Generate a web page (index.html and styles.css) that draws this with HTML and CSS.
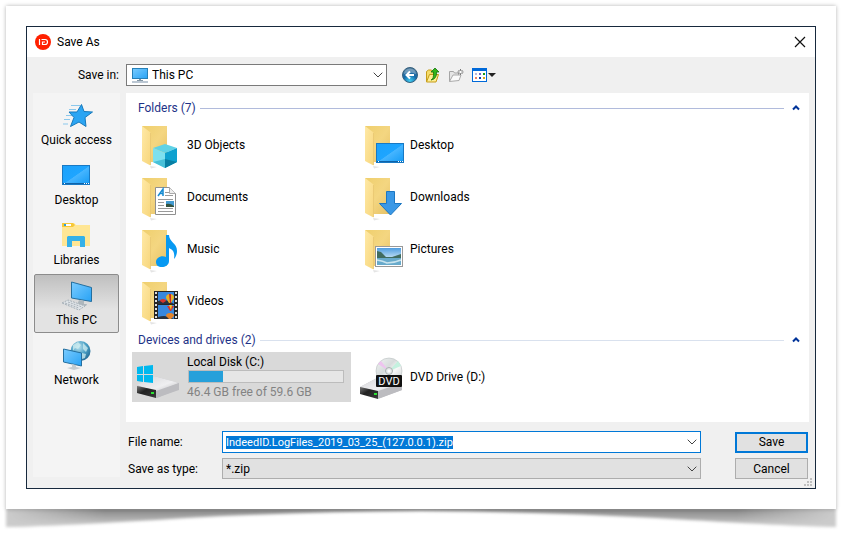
FILE: index.html
```html
<!DOCTYPE html>
<html lang="en">
<head>
<meta charset="utf-8">
<title>Save As</title>
<link rel="stylesheet" href="styles.css">
</head>
<body>
<svg class="defs" width="0" height="0" aria-hidden="true">
  <defs>
    <linearGradient id="flap" x1="0" y1="0" x2="1" y2="1"><stop offset="0" stop-color="#ffe9a6"/><stop offset="1" stop-color="#f7d67c"/></linearGradient>
    <linearGradient id="back" x1="0" y1="0" x2="1" y2="1"><stop offset="0" stop-color="#efcf6d"/><stop offset=".5" stop-color="#f4d681"/><stop offset="1" stop-color="#e6c165"/></linearGradient>
    <linearGradient id="screen" x1="0" y1="0" x2="1" y2="1"><stop offset="0" stop-color="#1ba1fb"/><stop offset=".5" stop-color="#1ea5ff"/><stop offset=".52" stop-color="#46b5ff"/><stop offset="1" stop-color="#129af5"/></linearGradient>
    <linearGradient id="glass" x1="0" y1="0" x2="1" y2="1"><stop offset="0" stop-color="#7bccff"/><stop offset="1" stop-color="#27a2f5"/></linearGradient>
    <linearGradient id="metal" x1="0" y1="0" x2="1" y2="1"><stop offset="0" stop-color="#d5d5d8"/><stop offset=".6" stop-color="#efeff1"/><stop offset="1" stop-color="#b5b5b8"/></linearGradient>
    <linearGradient id="front" x1="0" y1="0" x2="1" y2="1"><stop offset="0" stop-color="#777"/><stop offset=".4" stop-color="#222"/><stop offset="1" stop-color="#3a3a3a"/></linearGradient>
    <linearGradient id="disc" x1="0" y1="0" x2="1" y2="1"><stop offset="0" stop-color="#f2f4f4"/><stop offset=".4" stop-color="#d7dcdc"/><stop offset=".6" stop-color="#f8f8f8"/><stop offset="1" stop-color="#c4cbcb"/></linearGradient>
    <radialGradient id="globe" cx=".4" cy=".3" r=".8"><stop offset="0" stop-color="#b9e2ee"/><stop offset=".5" stop-color="#4a9fc4"/><stop offset="1" stop-color="#1c5f8a"/></radialGradient>
    <radialGradient id="orb" cx=".5" cy=".9" r=".9"><stop offset="0" stop-color="#42d0f5"/><stop offset=".5" stop-color="#1469a8"/><stop offset="1" stop-color="#4b7696"/></radialGradient>
    <linearGradient id="sky" x1="0" y1="0" x2="0" y2="1"><stop offset="0" stop-color="#4e9de0"/><stop offset="1" stop-color="#d9edf8"/></linearGradient>
    <linearGradient id="lift" x1="0" y1="0" x2="0" y2="1"><stop offset="0" stop-color="#808080"/><stop offset=".4" stop-color="#a0a0a0"/><stop offset="1" stop-color="#d2d2d2"/></linearGradient>
    <linearGradient id="corners"><stop offset="0" stop-color="#ccc"/><stop offset=".12" stop-color="#ccc" stop-opacity="0"/><stop offset=".88" stop-color="#ccc" stop-opacity="0"/><stop offset="1" stop-color="#ccc"/></linearGradient>
    <filter id="soft" x="-5%" y="-50%" width="110%" height="200%"><feGaussianBlur stdDeviation="1.6"/></filter>
    <g id="folder">
      <path d="M15 45l7 1-6 1.500z" fill="#e4e4e4"/>
      <path d="M7 5h25v36H14z" fill="url(#back)"/>
      <path d="M7 5l8.500 6.500v33L7 40z" fill="url(#flap)"/>
      <path d="M15.500 12v32" stroke="#e8c771" stroke-width=".8"/>
    </g>
  </defs>
</svg>

<main class="sheet">
  <svg class="sheet-shadow" viewBox="0 0 830 30" preserveAspectRatio="none" aria-hidden="true">
    <g filter="url(#soft)">
      <path d="M0 0H830V19Q780 18 650 10Q540 4 415 3Q290 4 180 10Q60 18 0 19z" fill="url(#lift)"/>
      <path d="M0 0H830V19Q780 18 650 10Q540 4 415 3Q290 4 180 10Q60 18 0 19z" fill="url(#corners)"/>
    </g>
  </svg>
  <section class="dialog" aria-labelledby="title">
    <header class="titlebar">
      <svg width="16" height="16" viewBox="0 0 16 16" aria-hidden="true"><circle cx="8" cy="8" r="8" fill="#ff2000"/><path d="M4.500 5v6M6.500 5.500H10q2.500 0 2.500 2.500T10 10.500H7.500V8H10" fill="none" stroke="#fff" stroke-width="1.200"/></svg>
      <h1 id="title">Save As</h1>
      <button class="close" type="button" aria-label="Close"><svg width="12" height="12" viewBox="0 0 12 12"><path d="M1 1l10 10M11 1L1 11" stroke="#111" stroke-width="1.200"/></svg></button>
    </header>

    <div class="toolbar">
      <label for="save-in">Save in:</label>
      <div class="combo location">
        <svg class="combo-icon" width="18" height="16" viewBox="0 0 18 16" aria-hidden="true"><rect x="1.500" y="1.500" width="15" height="10" fill="url(#glass)" stroke="#2680b8"/><path d="M6 13.500h6M8 12.500h2" stroke="#8296a5"/><path d="M1 15h16" stroke="#a5b5c4" stroke-width="1.500"/></svg>
        <select id="save-in"><option>This PC</option></select>
        <svg class="chevron" width="10" height="6" viewBox="0 0 10 6" aria-hidden="true"><path d="M.7.700L5 5 9.300.700"/></svg>
      </div>
      <nav class="tools" aria-label="Folder tools">
        <button type="button" aria-label="Back"><svg width="16" height="16" viewBox="0 0 16 16"><circle cx="8" cy="8" r="7.500" fill="url(#orb)" stroke="#37617e"/><path d="M2 7a6 5.500 0 0 1 12 0Q8 4 2 7z" fill="#fff" opacity=".3"/><path d="M12 8H4.500M8 4.500L4.500 8 8 11.500" fill="none" stroke="#fff" stroke-width="2"/></svg></button>
        <button type="button" aria-label="Up one level"><svg width="16" height="16" viewBox="0 0 16 16"><path d="M1.500 14.500v-10l2-1.500h3l1 2h3v2.500" fill="#f5dc6b" stroke="#c59c1a"/><path d="M1.500 15l3-7.500h9L11 15z" fill="#ffee94" stroke="#c59c1a"/><path d="M6 13q3-1 2.500-8H6l4-4 4 4h-2.500Q12 12 6 13z" fill="#31b51d" stroke="#17750d" stroke-width=".8"/></svg></button>
        <button type="button" aria-label="New folder"><svg width="16" height="16" viewBox="0 0 16 16"><path d="M1.500 14.500V4.500h4l1 1.500h4v2" fill="#e5e5e5" stroke="#a5a5a5"/><path d="M1.500 14.500L5 8h8l-2 5.500z" fill="#fafafa" stroke="#aaa"/><path d="M12.500 2v6M9.500 5h6M10.500 3l4 4M14.500 3l-4 4" stroke="#777"/><circle cx="12.500" cy="5" r="1.200" fill="#fff"/></svg></button>
        <button type="button" aria-label="View menu"><svg width="25" height="16" viewBox="0 0 25 16"><rect x="1.500" y="1.500" width="14" height="13" fill="#fff" stroke="#0069d9"/><path d="M1 2.500h15" stroke="#0069d9" stroke-width="3"/><path d="M4 6h2v2H4z" fill="#b7b7dc"/><path d="M8 6h2v2H8z" fill="#7467c9"/><path d="M12 6h2v2h-2z" fill="#169b16"/><path d="M4 10h2v2H4z" fill="#f08063"/><path d="M8 10h2v2H8z" fill="#0b3dab"/><path d="M12 10h2v2h-2z" fill="#dba717"/><path d="M17 6h8l-4 4z" fill="#222"/></svg></button>
      </nav>
    </div>

    <div class="body">
      <nav class="places" aria-label="Places">
        <button type="button"><svg width="32" height="32" viewBox="0 0 32 32"><path d="M10 5.500h9M8 9.500h7M5 15.500h6M3 19.500h6M2 24h5" stroke="#8bc8ec"/><path d="M20.500 4.500l2.500 7 8.500.5-7.500 5.500 1 9-7-4.500-8.500 4.500 3.500-9-5-5.500h8z" fill="#2ba5f3" stroke="#1779bb"/></svg><span>Quick access</span></button>
        <button type="button"><svg width="32" height="32" viewBox="0 0 32 32"><rect x="1.500" y="5.500" width="27" height="19" fill="url(#screen)" stroke="#1879c4"/><path d="M2 23.500h26" stroke="#0e62a8"/><path d="M3 23.500h1M23 23.500h1M25 23.500h1M27 23.500h1" stroke="#fff"/></svg><span>Desktop</span></button>
        <button type="button"><svg width="32" height="32" viewBox="0 0 32 32"><path d="M1 3h12l2 2h14v21H1z" fill="#ffe694"/><path d="M1 3h11l2 2-2 2H1z" fill="#f7c838"/><path d="M3 4h7v2H3z" fill="#fff"/><path d="M3 4h2v2H3z" fill="#2aa0dc"/><path d="M6 27V17l1-1h16l1 1v10h-5v-6h-8v6z" fill="#35b1e8"/></svg><span>Libraries</span></button>
        <button type="button" class="current" aria-current="true"><svg width="32" height="32" viewBox="0 0 32 32"><path d="M10.500 2l20 5.500v14l-20-3.500z" fill="url(#glass)" stroke="#246f9f"/><path d="M18 20l5 1v3h3l-1 2-9-1z" fill="#aeb7bd"/><path d="M1 23l6-3 17 6-6 4z" fill="#dfe4e8" stroke="#a5afb7" stroke-dasharray="2 1"/><path d="M4 23l14 5M7 22l14 5" stroke="#aab2b9" stroke-dasharray="2 1"/></svg><span>This PC</span></button>
        <button type="button"><svg width="32" height="32" viewBox="0 0 32 32"><circle cx="19.500" cy="11" r="10" fill="url(#globe)"/><path d="M12 5l5-3 3 3-3 4-3-1-2 3zM22 3l5 5-2 4-3-3zM21 13l4 1-1 4-3 1z" fill="#d0edf0" opacity=".75"/><path d="M2.500 9l18 4v13l-18-4z" fill="url(#glass)" stroke="#246f9f"/><path d="M11 24l4 1v2l5 1-7 2-7-2 5-1z" fill="#c4ccd1"/></svg><span>Network</span></button>
      </nav>

      <div class="content">
        <div class="files">
          <section>
            <header class="group"><h2>Folders (7)</h2><button type="button" aria-label="Collapse Folders"><svg width="8" height="6" viewBox="0 0 8 6"><path d="M1 4.500L4 1.500l3 3"/></svg></button></header>
            <ul class="tiles">
              <li><svg width="48" height="48" viewBox="0 0 48 48"><use href="#folder"/><path d="M18 27l12-4 12 4-12 5z" fill="#5fd2e6"/><path d="M18 27l12 5v15l-12-6z" fill="#7de0ef"/><path d="M42 27l-12 5v15l12-6z" fill="#0ea1cf"/><path d="M18 41l12-3v9z" fill="#48c0d8"/><path d="M42 41l-12-3v9z" fill="#087fa3"/></svg><span>3D Objects</span></li>
              <li><svg width="48" height="48" viewBox="0 0 48 48"><use href="#folder"/><rect x="18.500" y="22.500" width="27" height="19" fill="url(#screen)" stroke="#1879c4"/><path d="M19 40.500h26" stroke="#0e62a8"/><path d="M20 40.500h1M40 40.500h1M42 40.500h1M44 40.500h1" stroke="#fff"/></svg><span>Desktop</span></li>
              <li><svg width="48" height="48" viewBox="0 0 48 48"><use href="#folder"/><path d="M20.500 14.500h14l6 6v21h-20z" fill="#fff" stroke="#8f8f8f"/><path d="M34.500 14.500v6h6" fill="#eee" stroke="#aaa"/><path d="M23 23l5-7v7M25 20.500h3" fill="none" stroke="#168bd1" stroke-width="1.500"/><path d="M30 19.500h4M30 22.500h8M23 26.500h15M23 29.500h6M23 32.500h6M23 35.500h15M23 38.500h15" stroke="#9a9a9a"/><path d="M31 28h8v6h-8z" fill="#439bd1"/><path d="M31 31q4-1 8 2v1h-8z" fill="#35533f"/></svg><span>Documents</span></li>
              <li><svg width="48" height="48" viewBox="0 0 48 48"><use href="#folder"/><path d="M28.500 18.500h8v12h7L32.500 42 21.500 30.500h7z" fill="#3a98e6" stroke="#1c77c2"/></svg><span>Downloads</span></li>
              <li><svg width="48" height="48" viewBox="0 0 48 48"><use href="#folder"/><path d="M31 10h3c0 7 8 8 8 16 0 4-2 7-3 8 1-7-1-9-5-11v13c0 4-4 6-7 6-4 0-6-2-6-5 0-4 5-7 10-5z" fill="#0799f2"/></svg><span>Music</span></li>
              <li><svg width="48" height="48" viewBox="0 0 48 48"><use href="#folder"/><rect x="17.500" y="21.500" width="27" height="20" fill="#fff" stroke="#999"/><path d="M19 23h24v12H19z" fill="url(#sky)"/><path d="M19 26l4 1 5 5 6 0 9-3v6H19z" fill="#416c5f"/><path d="M19 33h24v7H19z" fill="#68aacb"/><path d="M19 35q6 1 10 3 7 0 14-3" fill="none" stroke="#c9e4ee" stroke-width="1.500"/></svg><span>Pictures</span></li>
              <li><svg width="48" height="48" viewBox="0 0 48 48"><use href="#folder"/><path d="M19 14h24v28H19z" fill="#252525"/><path d="M23 15h16v12H23zM23 28h16v14H23z" fill="#3888de"/><path d="M21 15v27M41 15v27" stroke="#ddd" stroke-width="2" stroke-dasharray="2 2"/><path d="M23 24q8-3 16 3H23zM23 40q8-3 16 2H23z" fill="#28313d"/><path d="M31 21a4 4 0 1 1 8 0l-3 5h-2z" fill="#e8b225"/><path d="M34 17h2v9h-1z" fill="#cc2828"/><path d="M25 24a3 2 0 0 1 6 0l-3 2zM32 29h7l-3 5h-1z" fill="#d6342c"/><path d="M34 28h3l-1 5z" fill="#f4c92d"/><path d="M31 39a4 3 0 0 1 8 0l-3 3h-2z" fill="#e5852b"/></svg><span>Videos</span></li>
            </ul>
          </section>
          <section>
            <header class="group devices"><h2>Devices and drives (2)</h2><button type="button" aria-label="Collapse Devices and drives"><svg width="8" height="6" viewBox="0 0 8 6"><path d="M1 4.500L4 1.500l3 3"/></svg></button></header>
            <ul class="tiles">
              <li class="selected">
                <svg width="48" height="48" viewBox="0 0 48 48"><path d="M2 33l17-10 25 7v6l-22 9-20-5z" fill="#c2c2c5"/><path d="M2 32l17-9 25 7-22 9z" fill="url(#metal)"/><path d="M2 33l19 4v8L2 40z" fill="url(#front)"/><path d="M21 38l23-8v7l-23 8z" fill="#bcbcc0"/><path d="M16 39h3v2h-3z" fill="#2be334"/><path d="M2 14l6-1v8H2zM9 13l9-1v9H9zM2 22h6v7l-6-1zM9 22h9v8l-9-1z" fill="#00b8ee"/></svg>
                <div class="drive">
                  <span>Local Disk (C:)</span>
                  <div class="meter" role="img" aria-label="22% used"><div class="used"></div></div>
                  <span class="free">46.4 GB free of 59.6 GB</span>
                </div>
              </li>
              <li>
                <svg width="48" height="48" viewBox="0 0 48 48"><path d="M2 34l17-9 25 6v6l-22 8-20-5z" fill="#c2c2c5"/><path d="M2 34l17-9 25 6-22 8z" fill="url(#metal)"/><path d="M2 34l18 4v8L2 41z" fill="url(#front)"/><path d="M20 38l24-8v7l-24 9z" fill="#bcbcc0"/><path d="M16 40h3v2h-3z" fill="#2be334"/><circle cx="31" cy="18" r="13" fill="url(#disc)" stroke="#b9c0c0" stroke-width=".6"/><path d="M31 18L20 11l3-3z" fill="#eec4ef"/><path d="M31 18l9-10 3 5z" fill="#c4f1df"/><circle cx="31" cy="18" r="3.500" fill="#e5e9e9" stroke="#a9b0b0"/><circle cx="31" cy="18" r="1.500" fill="#fff"/><rect x="18" y="22" width="26" height="12" rx="1" fill="#111"/><text x="31" y="32" class="dvd" text-anchor="middle">DVD</text></svg>
                <span>DVD Drive (D:)</span>
              </li>
            </ul>
          </section>
        </div>

        <form class="form">
          <label for="file-name">File name:</label>
          <div class="combo active">
            <input id="file-name" type="text" value="IndeedID.LogFiles_2019_03_25_(127.0.0.1).zip">
            <svg class="chevron" width="10" height="6" viewBox="0 0 10 6" aria-hidden="true"><path d="M.7.700L5 5 9.300.700"/></svg>
          </div>
          <button type="button" class="btn primary">Save</button>
          <label for="file-type">Save as type:</label>
          <div class="combo type">
            <select id="file-type"><option>*.zip</option></select>
            <svg class="chevron" width="10" height="6" viewBox="0 0 10 6" aria-hidden="true"><path d="M.7.700L5 5 9.300.700"/></svg>
          </div>
          <button type="button" class="btn">Cancel</button>
        </form>
      </div>
    </div>
    <svg class="grip" width="8" height="8" viewBox="0 0 8 8" aria-hidden="true"><path d="M6 0h2v2H6zM3 3h2v2H3zM6 3h2v2H6zM0 6h2v2H0zM3 6h2v2H3zM6 6h2v2H6z" fill="#bfbfbf"/></svg>
  </section>
</main>
<script src="script.js"></script>
</body>
</html>
```
FILE: styles.css
```css
* { box-sizing: border-box; }

body {
  margin: 0;
  padding: 6px 14px 29px 6px;
  background: #fff;
  color: #000;
  font: 12px/16px Roboto, "Open Sans", sans-serif;
}

h1, h2, ul { margin: 0; padding: 0; font: inherit; list-style: none; }
button, input, select { margin: 0; font: inherit; color: inherit; }
button { padding: 0; border: 0; background: none; }
svg { display: block; flex: none; }
.defs { position: absolute; }

/* Sheet with a lifted-corner shadow */
.sheet {
  position: relative;
  padding: 20px;
  background: #fff;
  box-shadow: 0 0 4px rgba(0, 0, 0, .3);
}
.sheet-shadow {
  position: absolute;
  z-index: -1;
  top: calc(100% - 1px);
  left: 0;
  width: 100%;
  height: 30px;
  overflow: visible;
}

.dialog {
  position: relative;
  border: 1px solid #17293d;
  background: #f0f0f0;
}

.titlebar {
  display: flex;
  align-items: center;
  gap: 6px;
  height: 30px;
  padding: 0 8px;
  background: #fff;
}
.close { margin-left: auto; padding: 1px; }

.toolbar {
  display: flex;
  align-items: center;
  height: 36px;
}
.toolbar label { width: 92px; margin-right: 7px; text-align: right; }

.combo {
  position: relative;
  display: flex;
  align-items: center;
  height: 22px;
  border: 1px solid #7a7a7a;
  background: #fff;
}
.combo select, .combo input {
  width: 100%;
  height: 100%;
  padding: 0 20px 0 3px;
  border: 0;
  outline: 0;
  background: none;
  appearance: none;
}
.combo input { font-size: 11px; }
.combo.location { width: 261px; }
.location select { padding-left: 25px; }
.combo-icon { position: absolute; left: 4px; }
.combo.active { border-color: #0078d7; }
.combo.type { height: 21px; border-color: #adadad; background: #e1e1e1; }
.chevron {
  position: absolute;
  right: 3px;
  fill: none;
  stroke: #444;
  pointer-events: none;
}
#file-name::selection { background: #0078d7; color: #fff; }

.tools { display: flex; gap: 7px; margin-left: 15px; }

.body { display: flex; gap: 6px; padding: 0 6px; }

.places {
  flex: none;
  width: 87px;
  margin-bottom: 11px;
  padding: 1px;
  background: #f4f4f4;
}
.places button {
  display: flex;
  flex-direction: column;
  align-items: center;
  width: 85px;
  height: 59px;
  margin-bottom: 1px;
  padding-top: 6px;
  white-space: nowrap;
}
.places .current {
  border: 1px solid #8c8c8c;
  border-radius: 2px;
  padding-top: 5px;
  background: linear-gradient(#bfbfbf, #e3e3e3 60%);
}

.content { flex: 1; min-width: 0; }

.files {
  padding: 3px 6px 20px;
  background: #fff;
}
.group {
  display: flex;
  align-items: center;
  height: 24px;
  padding: 0 3px 0 6px;
  color: #1e3287;
}
.group.devices { height: 26px; padding-top: 2px; }
.group h2 { display: flex; flex: 1; align-items: center; gap: 4px; }
.group h2::after { content: ""; flex: 1; height: 1px; background: #b1bbdc; }
.group.devices h2::after { background: #d9e1ee; }
.group button { margin-left: 8px; }
.group path { fill: none; stroke: #003399; stroke-width: 2; }

.tiles {
  display: grid;
  grid-template-columns: 219px 219px;
  gap: 2px 4px;
}
.tiles li {
  display: flex;
  align-items: center;
  gap: 4px;
  height: 50px;
  padding: 0 7px 0 3px;
}
.tiles .selected { background: #d9d9d9; }
.drive { flex: 1; }
.drive span { display: block; }
.drive .free { color: #838383; }
.meter {
  height: 13px;
  margin: 0 0 1px 1px;
  border: 1px solid #bcbcbc;
  background: #e6e6e6;
}
.used { width: 22%; height: 100%; background: #26a0da; }
.dvd { fill: #fff; font-size: 11px; }

.form {
  display: grid;
  grid-template-columns: 94px 1fr 73px;
  align-items: center;
  gap: 5px 0;
  padding: 9px 1px 9px 2px;
}
.form .combo { margin-right: 34px; }
.btn {
  height: 21px;
  border: 1px solid #adadad;
  background: #e1e1e1;
}
.btn.primary { border: 2px solid #0078d7; }

.grip { position: absolute; right: 3px; bottom: 2px; }
```
FILE: script.js
```js
const fileName = document.getElementById("file-name");
fileName.focus();
fileName.select();
```
